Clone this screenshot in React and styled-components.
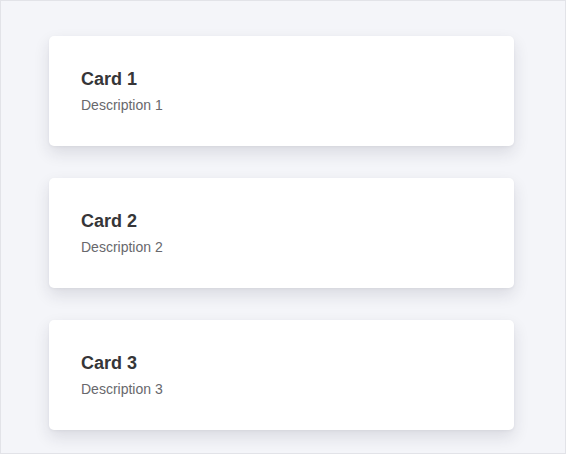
import React from 'react';
import styled, { createGlobalStyle } from 'styled-components';

const GlobalStyle = createGlobalStyle`
  html, body {
    margin: 0;
    padding: 0;
    background: #f4f5f9;
  }
  * {
    box-sizing: border-box;
  }
`;

const Page = styled.div`
  height: 100vh;
  overflow: hidden;
  border: 1px solid #e2e3e8;
  background: #f4f5f9;
  padding: 35px 51px 35px 48px;
  display: flex;
  flex-direction: column;
  gap: 32px;
  font-family: "Liberation Sans", Arial, sans-serif;
`;

const Card = styled.div`
  background: #ffffff;
  border-radius: 5px;
  padding: 32px;
  height: 110px;
  box-shadow: 0 7px 16px rgba(30, 35, 60, 0.12), 0 1px 3px rgba(30, 35, 60, 0.05);
`;

const Title = styled.h3`
  margin: 0 0 6px;
  font-size: 18px;
  line-height: 22px;
  font-weight: bold;
  color: #363638;
`;

const Description = styled.p`
  margin: 0;
  font-size: 14px;
  line-height: 18px;
  color: #68686c;
`;

const cards = [
  { id: 1, title: 'Card 1', description: 'Description 1' },
  { id: 2, title: 'Card 2', description: 'Description 2' },
  { id: 3, title: 'Card 3', description: 'Description 3' },
];

export default function App() {
  return (
    <>
      <GlobalStyle />
      <Page>
        {cards.map(card => (
          <Card key={card.id}>
            <Title>{card.title}</Title>
            <Description>{card.description}</Description>
          </Card>
        ))}
      </Page>
    </>
  );
}
